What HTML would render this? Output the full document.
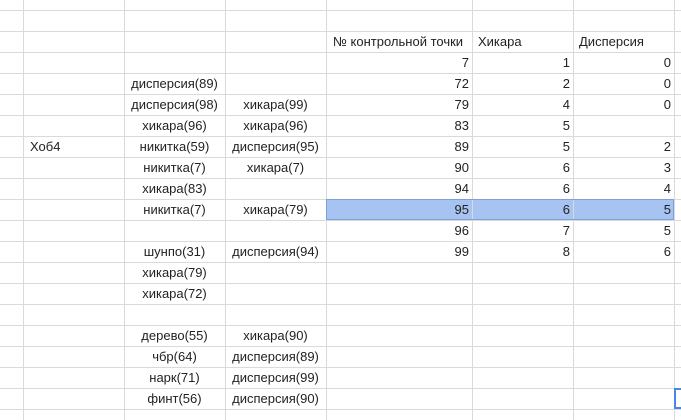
<!DOCTYPE html><html><head><meta charset="utf-8"><style>
body{margin:0;width:681px;height:420px;overflow:hidden;background:#fff;position:relative;font-family:"Liberation Sans",Arial,sans-serif;font-size:13px;color:#222}
.v{position:absolute;top:0;width:1px;height:420px;background:#dadada}
.h{position:absolute;left:0;height:1px;width:681px;background:#dadada}
.t{position:absolute;height:21px;line-height:21px;white-space:nowrap}
.c{text-align:center}.r{text-align:right}
</style></head><body>
<div style="position:absolute;left:326px;top:199px;width:348px;height:21px;background:#a6c3f1"></div>
<div class="v" style="left:23px"></div><div class="v" style="left:124px"></div><div class="v" style="left:225px"></div><div class="v" style="left:326px"></div><div class="v" style="left:472px"></div><div class="v" style="left:573px"></div><div class="v" style="left:674px"></div>
<div class="h" style="top:10px"></div><div class="h" style="top:31px"></div><div class="h" style="top:52px"></div><div class="h" style="top:73px"></div><div class="h" style="top:94px"></div><div class="h" style="top:115px"></div><div class="h" style="top:136px"></div><div class="h" style="top:157px"></div><div class="h" style="top:178px"></div><div class="h" style="top:199px"></div><div class="h" style="top:220px"></div><div class="h" style="top:241px"></div><div class="h" style="top:262px"></div><div class="h" style="top:283px"></div><div class="h" style="top:304px"></div><div class="h" style="top:325px"></div><div class="h" style="top:346px"></div><div class="h" style="top:367px"></div><div class="h" style="top:388px"></div><div class="h" style="top:409px"></div>
<div style="position:absolute;left:326px;top:199px;width:346px;height:19px;border:1px solid #7f9fd8"></div>
<div style="position:absolute;left:326px;top:199px;width:1px;height:21px;background:#7f9fd8"></div>
<div style="position:absolute;left:674px;top:388px;width:7px;height:21px;border:2px solid #4a86e8;border-right:none;box-sizing:border-box"></div>

<div class="t" style="left:333px;top:31px">№ контрольной точки</div>
<div class="t" style="left:478px;top:31px">Хикара</div>
<div class="t" style="left:579px;top:31px">Дисперсия</div>
<div class="t" style="left:30px;top:136px">Хоб4</div>

<div class="t c" style="left:124px;width:101px;top:73px">дисперсия(89)</div>
<div class="t c" style="left:124px;width:101px;top:94px">дисперсия(98)</div>
<div class="t c" style="left:225px;width:101px;top:94px">хикара(99)</div>
<div class="t c" style="left:124px;width:101px;top:115px">хикара(96)</div>
<div class="t c" style="left:225px;width:101px;top:115px">хикара(96)</div>
<div class="t c" style="left:124px;width:101px;top:136px">никитка(59)</div>
<div class="t c" style="left:225px;width:101px;top:136px">дисперсия(95)</div>
<div class="t c" style="left:124px;width:101px;top:157px">никитка(7)</div>
<div class="t c" style="left:225px;width:101px;top:157px">хикара(7)</div>
<div class="t c" style="left:124px;width:101px;top:178px">хикара(83)</div>
<div class="t c" style="left:124px;width:101px;top:199px">никитка(7)</div>
<div class="t c" style="left:225px;width:101px;top:199px">хикара(79)</div>
<div class="t c" style="left:124px;width:101px;top:241px">шунпо(31)</div>
<div class="t c" style="left:225px;width:101px;top:241px">дисперсия(94)</div>
<div class="t c" style="left:124px;width:101px;top:262px">хикара(79)</div>
<div class="t c" style="left:124px;width:101px;top:283px">хикара(72)</div>
<div class="t c" style="left:124px;width:101px;top:325px">дерево(55)</div>
<div class="t c" style="left:225px;width:101px;top:325px">хикара(90)</div>
<div class="t c" style="left:124px;width:101px;top:346px">чбр(64)</div>
<div class="t c" style="left:225px;width:101px;top:346px">дисперсия(89)</div>
<div class="t c" style="left:124px;width:101px;top:367px">нарк(71)</div>
<div class="t c" style="left:225px;width:101px;top:367px">дисперсия(99)</div>
<div class="t c" style="left:124px;width:101px;top:388px">финт(56)</div>
<div class="t c" style="left:225px;width:101px;top:388px">дисперсия(90)</div>

<div class="t r" style="left:326px;width:143px;top:52px">7</div><div class="t r" style="left:472px;width:98px;top:52px">1</div><div class="t r" style="left:573px;width:98px;top:52px">0</div>
<div class="t r" style="left:326px;width:143px;top:73px">72</div><div class="t r" style="left:472px;width:98px;top:73px">2</div><div class="t r" style="left:573px;width:98px;top:73px">0</div>
<div class="t r" style="left:326px;width:143px;top:94px">79</div><div class="t r" style="left:472px;width:98px;top:94px">4</div><div class="t r" style="left:573px;width:98px;top:94px">0</div>
<div class="t r" style="left:326px;width:143px;top:115px">83</div><div class="t r" style="left:472px;width:98px;top:115px">5</div>
<div class="t r" style="left:326px;width:143px;top:136px">89</div><div class="t r" style="left:472px;width:98px;top:136px">5</div><div class="t r" style="left:573px;width:98px;top:136px">2</div>
<div class="t r" style="left:326px;width:143px;top:157px">90</div><div class="t r" style="left:472px;width:98px;top:157px">6</div><div class="t r" style="left:573px;width:98px;top:157px">3</div>
<div class="t r" style="left:326px;width:143px;top:178px">94</div><div class="t r" style="left:472px;width:98px;top:178px">6</div><div class="t r" style="left:573px;width:98px;top:178px">4</div>
<div class="t r" style="left:326px;width:143px;top:199px">95</div><div class="t r" style="left:472px;width:98px;top:199px">6</div><div class="t r" style="left:573px;width:98px;top:199px">5</div>
<div class="t r" style="left:326px;width:143px;top:220px">96</div><div class="t r" style="left:472px;width:98px;top:220px">7</div><div class="t r" style="left:573px;width:98px;top:220px">5</div>
<div class="t r" style="left:326px;width:143px;top:241px">99</div><div class="t r" style="left:472px;width:98px;top:241px">8</div><div class="t r" style="left:573px;width:98px;top:241px">6</div>
</body></html>
